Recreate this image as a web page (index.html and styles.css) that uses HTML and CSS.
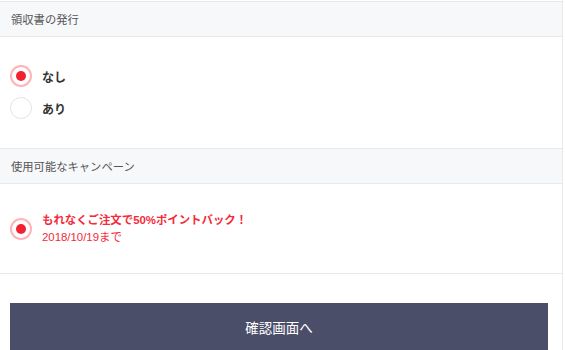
FILE: index.html
```html
<!DOCTYPE html>
<html lang="ja">
<head>
<meta charset="utf-8">
<link rel="stylesheet" href="styles.css">
</head>
<body>
<div class="page">
  <section class="section">
    <div class="section-head">領収書の発行</div>
    <div class="section-body receipt">
      <div class="option">
        <span class="radio checked"></span>
        <span class="option-label">なし</span>
      </div>
      <div class="option">
        <span class="radio"></span>
        <span class="option-label">あり</span>
      </div>
    </div>
  </section>
  <section class="section">
    <div class="section-head">使用可能なキャンペーン</div>
    <div class="section-body campaign">
      <div class="option">
        <span class="radio checked"></span>
        <div class="campaign-text">
          <div class="campaign-title">もれなくご注文で50%ポイントバック！</div>
          <div class="campaign-date">2018/10/19まで</div>
        </div>
      </div>
    </div>
  </section>
  <div class="actions">
    <button class="confirm" type="button">確認画面へ</button>
  </div>
</div>
</body>
</html>
```

FILE: styles.css
```css
html, body {
  margin: 0;
  padding: 0;
  background: #ffffff;
}
body {
  font-family: "Liberation Sans", "Noto Sans CJK JP", sans-serif;
  color: #333;
}
.page {
  width: 562px;
  min-height: 350px;
  border-right: 1px solid #e6e8ec;
  padding-top: 1px;
  box-sizing: content-box;
}
.section-head {
  height: 34px;
  display: flex;
  align-items: center;
  padding-left: 11px;
  background: #f7f8fa;
  border-top: 1px solid #e6e8ec;
  border-bottom: 1px solid #e6e8ec;
  font-size: 11.3px;
  color: #555;
}
.section-body {
  padding: 0 10px;
}
.receipt {
  height: 111px;
  padding-top: 23px;
  box-sizing: border-box;
}
.campaign {
  height: 90px;
  display: flex;
  align-items: center;
  border-bottom: 1px solid #e6e8ec;
  box-sizing: border-box;
}
.option {
  display: flex;
  align-items: center;
  gap: 10px;
}
.receipt .option {
  height: 32px;
}
.radio {
  width: 22px;
  height: 22px;
  box-sizing: border-box;
  border-radius: 50%;
  border: 1.5px solid #e4e4e6;
  display: flex;
  align-items: center;
  justify-content: center;
  flex: none;
}
.radio.checked {
  border: 2px solid #ffb3b6;
}
.radio.checked::after {
  content: "";
  width: 10px;
  height: 10px;
  border-radius: 50%;
  background: #f1212f;
}
.option-label {
  font-size: 12px;
  font-weight: bold;
  color: #333;
}
.campaign-text {
  color: #f32b3a;
  font-size: 11.4px;
  line-height: 17px;
}
.campaign-title {
  font-weight: bold;
}
.actions {
  padding: 29px 14px 0 10px;
}
.confirm {
  display: block;
  width: 100%;
  height: 48px;
  border: none;
  background: #4a4e69;
  color: #ffffff;
  font-family: "Liberation Sans", "Noto Sans CJK JP", sans-serif;
  font-size: 13.5px;
  cursor: pointer;
}
```
